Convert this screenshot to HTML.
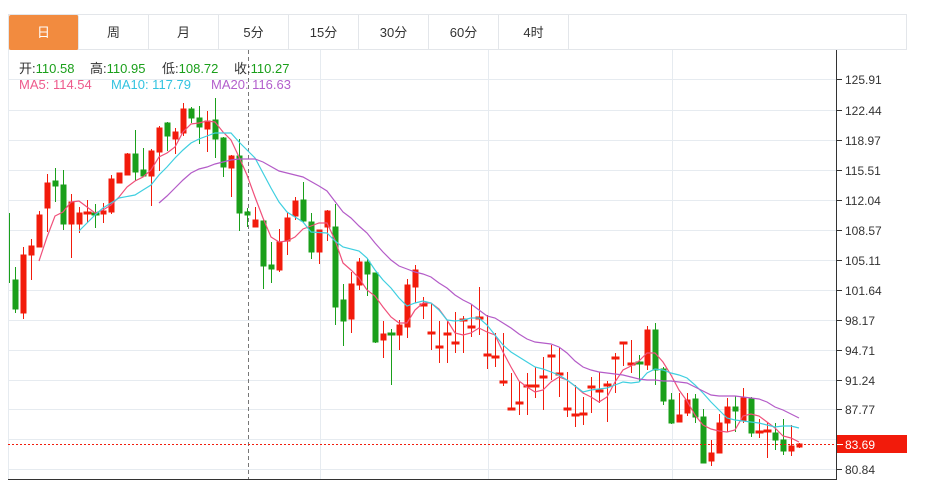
<!DOCTYPE html>
<html><head><meta charset="utf-8"><style>
body{margin:0;background:#fff;width:935px;height:481px;overflow:hidden;font-family:"Liberation Sans","Noto Sans CJK SC",sans-serif;}
.tabs{position:absolute;left:8px;top:14px;width:899px;height:36px;border:1px solid #e3e6ea;box-sizing:border-box;}
.tab{position:absolute;top:0;height:35px;width:70px;border-right:1px solid #e3e6ea;box-sizing:border-box;text-align:center;line-height:35px;font-size:13px;color:#333;}
.tab.on{background:#f28b3f;color:#fff;border-radius:2px;}
.hd{position:absolute;font-size:13px;white-space:nowrap;}
.g{color:#1a9f1a}.k{color:#333}
</style></head><body>
<div class="tabs">
<div class="tab on" style="left:0">日</div>
<div class="tab" style="left:70px">周</div>
<div class="tab" style="left:140px">月</div>
<div class="tab" style="left:210px">5分</div>
<div class="tab" style="left:280px">15分</div>
<div class="tab" style="left:350px">30分</div>
<div class="tab" style="left:420px">60分</div>
<div class="tab" style="left:490px">4时</div>
</div>
<svg width="935" height="481" style="position:absolute;left:0;top:0" xmlns="http://www.w3.org/2000/svg">
<g stroke="#e6ebf0" stroke-width="1">
<line x1="8" y1="79.5" x2="836" y2="79.5"/><line x1="8" y1="110.5" x2="836" y2="110.5"/><line x1="8" y1="140.5" x2="836" y2="140.5"/><line x1="8" y1="170.5" x2="836" y2="170.5"/><line x1="8" y1="200.5" x2="836" y2="200.5"/><line x1="8" y1="230.5" x2="836" y2="230.5"/><line x1="8" y1="260.5" x2="836" y2="260.5"/><line x1="8" y1="290.5" x2="836" y2="290.5"/><line x1="8" y1="320.5" x2="836" y2="320.5"/><line x1="8" y1="350.5" x2="836" y2="350.5"/><line x1="8" y1="380.5" x2="836" y2="380.5"/><line x1="8" y1="409.5" x2="836" y2="409.5"/><line x1="8" y1="439.5" x2="836" y2="439.5"/><line x1="8" y1="469.5" x2="836" y2="469.5"/>
<line x1="320.5" y1="50" x2="320.5" y2="479"/><line x1="488.5" y1="50" x2="488.5" y2="479"/><line x1="672.5" y1="50" x2="672.5" y2="479"/>
<line x1="8.5" y1="50" x2="8.5" y2="479"/>
</g>
<line x1="248.5" y1="50" x2="248.5" y2="479" stroke="#777" stroke-dasharray="4,3"/>
<line x1="9.5" y1="213" x2="9.5" y2="283" stroke="#1a9f1a"/>
<g stroke="#1a9f1a" fill="#1a9f1a">
<line x1="15.5" y1="267" x2="15.5" y2="313"/><rect x="13" y="280" width="5" height="29"/>
<line x1="55.5" y1="168" x2="55.5" y2="202"/><rect x="53" y="181" width="5" height="5"/>
<line x1="63.5" y1="170" x2="63.5" y2="230"/><rect x="61" y="185" width="5" height="39"/>
<line x1="95.5" y1="204" x2="95.5" y2="228"/><rect x="92" y="213" width="7" height="2"/>
<line x1="135.5" y1="130" x2="135.5" y2="181"/><rect x="133" y="154" width="5" height="18"/>
<line x1="143.5" y1="148" x2="143.5" y2="177"/><rect x="141" y="170" width="5" height="6"/>
<line x1="167.5" y1="122" x2="167.5" y2="151"/><rect x="165" y="123" width="5" height="13"/>
<line x1="191.5" y1="107" x2="191.5" y2="123"/><rect x="189" y="109" width="5" height="9"/>
<line x1="199.5" y1="106" x2="199.5" y2="144"/><rect x="197" y="118" width="5" height="9"/>
<line x1="215.5" y1="98" x2="215.5" y2="158"/><rect x="213" y="120" width="5" height="19"/>
<line x1="223.5" y1="137" x2="223.5" y2="177"/><rect x="221" y="138" width="5" height="29"/>
<line x1="239.5" y1="139" x2="239.5" y2="231"/><rect x="237" y="156" width="5" height="57"/>
<line x1="247.5" y1="208" x2="247.5" y2="227"/><rect x="245" y="212" width="5" height="3"/>
<line x1="263.5" y1="220" x2="263.5" y2="289"/><rect x="261" y="221" width="5" height="45"/>
<line x1="271.5" y1="242" x2="271.5" y2="283"/><rect x="269" y="265" width="5" height="4"/>
<line x1="303.5" y1="182" x2="303.5" y2="222"/><rect x="301" y="200" width="5" height="21"/>
<line x1="311.5" y1="213" x2="311.5" y2="259"/><rect x="309" y="222" width="5" height="30"/>
<line x1="335.5" y1="204" x2="335.5" y2="325"/><rect x="333" y="227" width="5" height="80"/>
<line x1="343.5" y1="284" x2="343.5" y2="346"/><rect x="341" y="300" width="5" height="21"/>
<line x1="367.5" y1="259" x2="367.5" y2="296"/><rect x="365" y="262" width="5" height="12"/>
<line x1="375.5" y1="273" x2="375.5" y2="343"/><rect x="373" y="273" width="5" height="69"/>
<line x1="391.5" y1="329" x2="391.5" y2="385"/><rect x="388" y="333" width="7" height="2"/>
<line x1="639.5" y1="355" x2="639.5" y2="381"/><rect x="636" y="362" width="7" height="2"/>
<line x1="655.5" y1="323" x2="655.5" y2="385"/><rect x="653" y="330" width="5" height="40"/>
<line x1="663.5" y1="367" x2="663.5" y2="405"/><rect x="661" y="369" width="5" height="32"/>
<line x1="671.5" y1="393" x2="671.5" y2="424"/><rect x="669" y="400" width="5" height="23"/>
<line x1="695.5" y1="394" x2="695.5" y2="423"/><rect x="693" y="399" width="5" height="18"/>
<line x1="703.5" y1="409" x2="703.5" y2="463"/><rect x="701" y="417" width="5" height="46"/>
<line x1="735.5" y1="396" x2="735.5" y2="432"/><rect x="733" y="407" width="5" height="4"/>
<line x1="751.5" y1="397" x2="751.5" y2="437"/><rect x="749" y="399" width="5" height="34"/>
<line x1="775.5" y1="423" x2="775.5" y2="450"/><rect x="773" y="433" width="5" height="7"/>
<line x1="783.5" y1="419" x2="783.5" y2="455"/><rect x="781" y="440" width="5" height="11"/>
</g>
<g stroke="#f21b0b" fill="#f21b0b">
<line x1="23.5" y1="247" x2="23.5" y2="319"/><rect x="21" y="255" width="5" height="58"/>
<line x1="31.5" y1="239" x2="31.5" y2="280"/><rect x="29" y="246" width="5" height="9"/>
<line x1="39.5" y1="211" x2="39.5" y2="247"/><rect x="37" y="215" width="5" height="32"/>
<line x1="47.5" y1="174" x2="47.5" y2="232"/><rect x="45" y="183" width="5" height="25"/>
<line x1="71.5" y1="194" x2="71.5" y2="258"/><rect x="69" y="202" width="5" height="22"/>
<line x1="79.5" y1="207" x2="79.5" y2="233"/><rect x="77" y="213" width="5" height="11"/>
<line x1="87.5" y1="200" x2="87.5" y2="223"/><rect x="84" y="212" width="7" height="2"/>
<line x1="103.5" y1="203" x2="103.5" y2="223"/><rect x="101" y="211" width="5" height="3"/>
<line x1="111.5" y1="175" x2="111.5" y2="214"/><rect x="109" y="179" width="5" height="33"/>
<line x1="119.5" y1="173" x2="119.5" y2="183"/><rect x="117" y="173" width="5" height="10"/>
<line x1="127.5" y1="153" x2="127.5" y2="175"/><rect x="125" y="154" width="5" height="21"/>
<line x1="151.5" y1="149" x2="151.5" y2="206"/><rect x="149" y="151" width="5" height="25"/>
<line x1="159.5" y1="126" x2="159.5" y2="171"/><rect x="157" y="128" width="5" height="24"/>
<line x1="175.5" y1="128" x2="175.5" y2="154"/><rect x="173" y="132" width="5" height="7"/>
<line x1="183.5" y1="103" x2="183.5" y2="136"/><rect x="181" y="109" width="5" height="24"/>
<line x1="207.5" y1="111" x2="207.5" y2="152"/><rect x="205" y="121" width="5" height="8"/>
<line x1="231.5" y1="155" x2="231.5" y2="197"/><rect x="229" y="156" width="5" height="12"/>
<line x1="255.5" y1="207" x2="255.5" y2="227"/><rect x="253" y="220" width="5" height="7"/>
<line x1="279.5" y1="229" x2="279.5" y2="272"/><rect x="277" y="242" width="5" height="28"/>
<line x1="287.5" y1="213" x2="287.5" y2="255"/><rect x="285" y="218" width="5" height="23"/>
<line x1="295.5" y1="197" x2="295.5" y2="220"/><rect x="293" y="201" width="5" height="15"/>
<line x1="319.5" y1="230" x2="319.5" y2="264"/><rect x="317" y="230" width="5" height="22"/>
<line x1="327.5" y1="210" x2="327.5" y2="241"/><rect x="325" y="211" width="5" height="16"/>
<line x1="351.5" y1="272" x2="351.5" y2="333"/><rect x="349" y="284" width="5" height="35"/>
<line x1="359.5" y1="258" x2="359.5" y2="290"/><rect x="357" y="262" width="5" height="23"/>
<line x1="383.5" y1="321" x2="383.5" y2="358"/><rect x="381" y="334" width="5" height="6"/>
<line x1="399.5" y1="320" x2="399.5" y2="350"/><rect x="397" y="325" width="5" height="10"/>
<line x1="407.5" y1="279" x2="407.5" y2="338"/><rect x="405" y="285" width="5" height="42"/>
<line x1="415.5" y1="265" x2="415.5" y2="303"/><rect x="413" y="270" width="5" height="17"/>
<line x1="423.5" y1="297" x2="423.5" y2="319"/><rect x="420" y="304" width="7" height="2"/>
<line x1="431.5" y1="303" x2="431.5" y2="350"/><rect x="428" y="332" width="7" height="2"/>
<line x1="439.5" y1="321" x2="439.5" y2="363"/><rect x="436" y="346" width="7" height="2"/>
<line x1="447.5" y1="321" x2="447.5" y2="363"/><rect x="444" y="333" width="7" height="2"/>
<line x1="455.5" y1="312" x2="455.5" y2="353"/><rect x="452" y="342" width="7" height="2"/>
<line x1="463.5" y1="316" x2="463.5" y2="353"/><rect x="460" y="319" width="7" height="2"/>
<line x1="471.5" y1="304" x2="471.5" y2="337"/><rect x="468" y="326" width="7" height="2"/>
<line x1="479.5" y1="287" x2="479.5" y2="335"/><rect x="476" y="317" width="7" height="2"/>
<line x1="487.5" y1="315" x2="487.5" y2="369"/><rect x="484" y="354" width="7" height="2"/>
<line x1="495.5" y1="333" x2="495.5" y2="367"/><rect x="492" y="356" width="7" height="2"/>
<line x1="503.5" y1="333" x2="503.5" y2="386"/><rect x="500" y="381" width="7" height="2"/>
<line x1="511.5" y1="373" x2="511.5" y2="410"/><rect x="508" y="408" width="7" height="2"/>
<line x1="519.5" y1="382" x2="519.5" y2="415"/><rect x="516" y="402" width="7" height="2"/>
<line x1="527.5" y1="373" x2="527.5" y2="415"/><rect x="524" y="385" width="7" height="2"/>
<line x1="535.5" y1="367" x2="535.5" y2="398"/><rect x="532" y="385" width="7" height="2"/>
<line x1="543.5" y1="357" x2="543.5" y2="410"/><rect x="540" y="376" width="7" height="2"/>
<line x1="551.5" y1="345" x2="551.5" y2="380"/><rect x="548" y="355" width="7" height="2"/>
<line x1="559.5" y1="348" x2="559.5" y2="397"/><rect x="556" y="373" width="7" height="2"/>
<line x1="567.5" y1="372" x2="567.5" y2="417"/><rect x="564" y="408" width="7" height="2"/>
<line x1="575.5" y1="385" x2="575.5" y2="427"/><rect x="572" y="414" width="7" height="2"/>
<line x1="583.5" y1="397" x2="583.5" y2="425"/><rect x="580" y="413" width="7" height="2"/>
<line x1="591.5" y1="377" x2="591.5" y2="413"/><rect x="588" y="386" width="7" height="2"/>
<line x1="599.5" y1="372" x2="599.5" y2="403"/><rect x="596" y="390" width="7" height="2"/>
<line x1="607.5" y1="381" x2="607.5" y2="422"/><rect x="604" y="384" width="7" height="2"/>
<line x1="615.5" y1="353" x2="615.5" y2="393"/><rect x="612" y="357" width="7" height="2"/>
<line x1="623.5" y1="343" x2="623.5" y2="366"/><rect x="620" y="342" width="7" height="2"/>
<line x1="631.5" y1="340" x2="631.5" y2="373"/><rect x="628" y="363" width="7" height="2"/>
<line x1="647.5" y1="326" x2="647.5" y2="370"/><rect x="645" y="330" width="5" height="35"/>
<line x1="679.5" y1="393" x2="679.5" y2="422"/><rect x="677" y="415" width="5" height="7"/>
<line x1="687.5" y1="393" x2="687.5" y2="416"/><rect x="685" y="400" width="5" height="13"/>
<line x1="711.5" y1="440" x2="711.5" y2="466"/><rect x="709" y="453" width="5" height="8"/>
<line x1="719.5" y1="414" x2="719.5" y2="453"/><rect x="717" y="423" width="5" height="30"/>
<line x1="727.5" y1="398" x2="727.5" y2="432"/><rect x="725" y="407" width="5" height="16"/>
<line x1="743.5" y1="388" x2="743.5" y2="423"/><rect x="741" y="398" width="5" height="23"/>
<line x1="759.5" y1="419" x2="759.5" y2="438"/><rect x="756" y="431" width="7" height="2"/>
<line x1="767.5" y1="423" x2="767.5" y2="458"/><rect x="764" y="430" width="7" height="2"/>
<line x1="791.5" y1="425" x2="791.5" y2="456"/><rect x="789" y="446" width="5" height="5"/>
<line x1="799.5" y1="443" x2="799.5" y2="448"/><rect x="797" y="444" width="5" height="3"/>
</g>
<polyline fill="none" stroke="#f0507a" stroke-width="1.2" points="39,261 47,237 55,216 63,212 71,202 79,201 87,207 95,213 103,210 111,205 119,197 127,187 135,181 143,177 151,170 159,157 167,153 175,147 183,132 191,124 199,123 207,121 215,122 223,132 231,140 239,157 247,175 255,197 263,218 271,237 279,242 287,241 295,237 303,229 311,226 319,223 327,223 335,240 343,263 351,270 359,278 367,290 375,296 383,307 391,317 399,323 407,323 415,310 423,303 431,303 439,309 447,320 455,333 463,335 471,333 479,328 487,332 495,335 503,352 511,367 519,381 527,387 535,392 543,390 551,382 559,377 567,380 575,386 583,393 591,397 599,402 607,397 615,382 623,370 631,366 639,361 647,353 655,353 663,362 671,375 679,390 687,401 695,415 703,425 711,429 719,431 727,432 735,430 743,416 751,414 759,416 767,422 775,428 783,436 791,438 799,442"/>
<polyline fill="none" stroke="#3fcfe0" stroke-width="1.2" points="79,231 87,223 95,215 103,208 111,203 119,198 135,195 143,190 151,185 159,175 167,167 175,158 183,150 191,143 199,139 207,136 215,133 223,133 231,133 239,142 247,150 255,158 263,173 271,188 279,202 287,212 295,217 303,222 311,232 327,233 335,241 343,247 359,251 367,258 375,270 383,280 391,288 399,298 407,306 415,303 423,301 431,303 439,310 447,320 455,321 463,320 471,318 479,318 487,325 495,335 503,345 511,352 519,357 527,362 535,367 543,369 559,375 567,380 575,386 583,392 591,390 599,389 607,388 615,385 623,382 631,383 639,382 647,373 655,369 663,370 671,373 679,375 687,378 695,385 703,393 711,402 719,410 727,418 735,420 743,421 751,422 759,423 767,425 775,427 783,426 791,426 799,428"/>
<polyline fill="none" stroke="#b45cc8" stroke-width="1.2" points="159,203 167,196 175,188 183,180 191,173 199,169 207,167 215,164 223,162 231,160 239,159 255,159 263,162 279,171 287,173 303,177 319,186 327,191 343,212 351,218 359,226 367,233 375,243 383,252 391,260 399,266 407,269 415,272 423,274 431,277 439,283 447,288 455,295 463,300 471,304 479,310 487,316 495,318 503,323 511,328 519,334 527,339 535,342 543,343 551,344 559,347 567,353 575,361 583,367 591,370 599,372 607,373 615,374 623,375 631,377 639,379 647,380 655,380 663,381 671,381 679,382 687,383 695,387 703,391 711,395 719,396 727,396 735,396 743,397 751,398 759,399 767,402 775,407 783,410 791,414 799,418"/>
<line x1="8" y1="444.5" x2="836" y2="444.5" stroke="#f21b0b" stroke-dasharray="2,2"/>
<line x1="836.5" y1="50" x2="836.5" y2="479" stroke="#333"/>
<line x1="8" y1="479.5" x2="837" y2="479.5" stroke="#333"/>
<g stroke="#333">
<line x1="836" y1="79.5" x2="842" y2="79.5"/><line x1="836" y1="110.5" x2="842" y2="110.5"/><line x1="836" y1="140.5" x2="842" y2="140.5"/><line x1="836" y1="170.5" x2="842" y2="170.5"/><line x1="836" y1="200.5" x2="842" y2="200.5"/><line x1="836" y1="230.5" x2="842" y2="230.5"/><line x1="836" y1="260.5" x2="842" y2="260.5"/><line x1="836" y1="290.5" x2="842" y2="290.5"/><line x1="836" y1="320.5" x2="842" y2="320.5"/><line x1="836" y1="350.5" x2="842" y2="350.5"/><line x1="836" y1="380.5" x2="842" y2="380.5"/><line x1="836" y1="409.5" x2="842" y2="409.5"/><line x1="836" y1="469.5" x2="842" y2="469.5"/>
</g>
<g font-family="Liberation Sans, sans-serif" font-size="12" fill="#333">
<text x="845" y="84">125.91</text><text x="845" y="115">122.44</text><text x="845" y="145">118.97</text><text x="845" y="175">115.51</text><text x="845" y="205">112.04</text><text x="845" y="235">108.57</text><text x="845" y="265">105.11</text><text x="845" y="295">101.64</text><text x="845" y="325">98.17</text><text x="845" y="355">94.71</text><text x="845" y="385">91.24</text><text x="845" y="414">87.77</text><text x="845" y="474">80.84</text>
</g>
<rect x="837" y="435" width="70" height="18" fill="#f21b0b"/>
<line x1="837" y1="444.5" x2="843" y2="444.5" stroke="#fff"/>
<text x="845" y="449" font-family="Liberation Sans, sans-serif" font-size="12" fill="#fff">83.69</text>
</svg>
<div class="hd" style="left:19px;top:58px"><span class="k">开:</span><span class="g">110.58</span></div>
<div class="hd" style="left:90px;top:58px"><span class="k">高:</span><span class="g">110.95</span></div>
<div class="hd" style="left:162px;top:58px"><span class="k">低:</span><span class="g">108.72</span></div>
<div class="hd" style="left:234px;top:58px"><span class="k">收:</span><span class="g">110.27</span></div>
<div class="hd" style="left:19px;top:77px;color:#ee5a8c">MA5: 114.54</div>
<div class="hd" style="left:111px;top:77px;color:#33c3e0">MA10: 117.79</div>
<div class="hd" style="left:211px;top:77px;color:#b35fcc">MA20: 116.63</div>
</body></html>
